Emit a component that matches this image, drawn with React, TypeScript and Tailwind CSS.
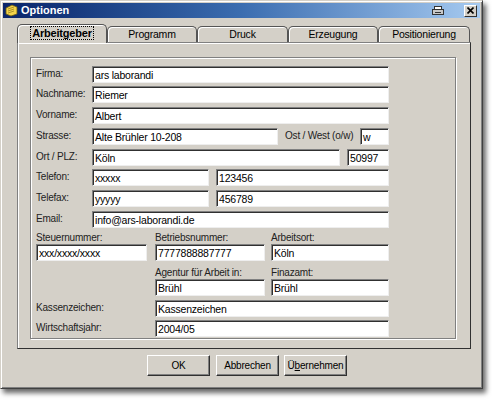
import React from "react";

const font = "font-['Liberation_Sans',Arial,sans-serif] tracking-[-0.2px]";

function Input({ value, className = "" }: { value: string; className?: string }) {
  return (
    <div
      className={`h-[17px] shrink-0 overflow-hidden whitespace-nowrap bg-white border border-t-[#808080] border-l-[#808080] border-r-[#eeeeee] border-b-[#eeeeee] shadow-[inset_1px_1px_0_#303030] pl-[2px] pt-[1px] text-[10.5px] leading-[14px] text-black ${className}`}
    >
      {value}
    </div>
  );
}

function Label({ children, className = "" }: { children: React.ReactNode; className?: string }) {
  return (
    <div className={`shrink-0 whitespace-nowrap text-[10px] leading-[13px] text-[#222] ${className}`}>{children}</div>
  );
}

function Tab({ label, w, active }: { label: string; w: string; active?: boolean }) {
  if (active)
    return (
      <div
        className={`${w} relative z-10 -mb-px h-[19px] shrink-0 rounded-t-[5px] border border-b-0 border-[#555] bg-[#d4d0c8] shadow-[inset_1px_1px_0_#fff] flex items-center justify-center pb-[2px]`}
      >
        <span className="border border-dotted border-black px-[1px] text-[11px] font-bold leading-[12px] text-black">
          {label}
        </span>
      </div>
    );
  return (
    <div
      className={`${w} h-[16px] shrink-0 rounded-t-[5px] border border-b-0 border-[#555] bg-[#d4d0c8] shadow-[inset_1px_1px_0_#fff] flex items-center justify-center text-[10.5px] leading-[13px] text-black`}
    >
      {label}
    </div>
  );
}

function Button({ children, className = "" }: { children: React.ReactNode; className?: string }) {
  return (
    <div
      className={`w-[63px] h-[21px] shrink-0 bg-[#d4d0c8] border border-t-white border-l-white border-r-[#303030] border-b-[#303030] shadow-[inset_-1px_-1px_0_#808080] flex items-center justify-center text-[10px] text-black ${className}`}
    >
      {children}
    </div>
  );
}

export default function App() {
  return (
    <div className={`w-[492px] h-[400px] bg-white ${font}`}>
      <div className="w-[483px] h-[389px] bg-[#d4d0c8] border border-t-[#d4d0c8] border-l-[#d4d0c8] border-r-[#404040] border-b-[#404040] shadow-[inset_1px_1px_0_#fff,inset_-1px_-1px_0_#808080,3px_4px_5px_rgba(0,0,0,0.6)] p-[2px] flex flex-col">
        {/* title bar */}
        <div className="h-[15px] flex items-center bg-linear-to-r from-[#0a246a] via-[#3b6db0] to-[#a6caf0] pl-[2px] pr-[3px]">
          <svg width="13" height="13" viewBox="0 0 13 13" className="shrink-0">
            <path d="M1 4 L7 1 L12 3 L12 10 L6 12 L1 10 Z" fill="#f3d34a" stroke="#6b5a10" strokeWidth="0.8" />
            <path d="M3 5 L9 3 M3 7 L9 5 M3 9 L9 7" stroke="#8a7420" strokeWidth="0.7" />
          </svg>
          <span className="ml-[3px] text-[11px] font-bold leading-[13px] tracking-normal text-white">Optionen</span>
          <div className="ml-auto flex items-center">
            <div className="w-[12px] h-[10px] flex items-center justify-center">
              <svg width="12" height="10" viewBox="0 0 12 10">
                <rect x="0.5" y="3.5" width="11" height="5" fill="#c8c8c8" stroke="#333" strokeWidth="1" />
                <rect x="2.5" y="0.5" width="7" height="3" fill="#fff" stroke="#333" strokeWidth="1" />
                <rect x="3" y="6" width="6" height="1" fill="#333" />
              </svg>
            </div>
            <div className="ml-[20px] w-[13px] h-[12px] bg-[#d4d0c8] border border-t-white border-l-white border-r-[#303030] border-b-[#303030] flex items-center justify-center">
              <svg width="7" height="7" viewBox="0 0 7 7">
                <path d="M0.5 0.5 L6.5 6.5 M6.5 0.5 L0.5 6.5" stroke="#000" strokeWidth="1.6" />
              </svg>
            </div>
          </div>
        </div>

        {/* tabs */}
        <div className="mt-[6px] ml-[14px] flex items-end h-[18px]">
          <Tab label="Arbeitgeber" w="w-[90px]" active />
          <Tab label="Programm" w="w-[90px]" />
          <Tab label="Druck" w="w-[91px]" />
          <Tab label="Erzeugung" w="w-[90px]" />
          <Tab label="Positionierung" w="w-[92px]" />
        </div>

        {/* panel */}
        <div className="ml-[14px] w-[454px] h-[307px] border border-[#808080] border-r-[#303030] border-b-[#303030] shadow-[inset_1px_1px_0_#fff] pt-[14px] pl-[12px]">
          <div className="w-[426px] h-[282px] border border-[#808080] shadow-[inset_1px_1px_0_#fff,1px_1px_0_#fff] pt-[8px] pl-[5px] flex flex-col">
            <div className="flex items-center w-[353px]">
              <Label className="w-[56px] -mt-[2px]">Firma:</Label>
              <Input value="ars laborandi" className="w-[297px]" />
            </div>
            <div className="mt-[3px] flex items-center w-[353px]">
              <Label className="w-[56px] -mt-[2px]">Nachname:</Label>
              <Input value="Riemer" className="w-[297px]" />
            </div>
            <div className="mt-[4px] flex items-center w-[353px]">
              <Label className="w-[56px] -mt-[2px]">Vorname:</Label>
              <Input value="Albert" className="w-[297px]" />
            </div>
            <div className="mt-[4px] flex items-center w-[353px]">
              <Label className="w-[56px] -mt-[2px]">Strasse:</Label>
              <Input value="Alte Brühler 10-208" className="w-[186px]" />
              <Label className="ml-[7px] -mt-[2px]">Ost / West (o/w)</Label>
              <Input value="w" className="ml-auto w-[29px]" />
            </div>
            <div className="mt-[4px] flex items-center w-[353px]">
              <Label className="w-[56px] -mt-[2px]">Ort / PLZ:</Label>
              <Input value="Köln" className="w-[248px]" />
              <Input value="50997" className="ml-auto w-[42px]" />
            </div>
            <div className="mt-[3px] flex items-center w-[353px]">
              <Label className="w-[56px] -mt-[2px]">Telefon:</Label>
              <Input value="xxxxx" className="w-[117px]" />
              <Input value="123456" className="ml-auto w-[173px]" />
            </div>
            <div className="mt-[4px] flex items-center w-[353px]">
              <Label className="w-[56px] -mt-[2px]">Telefax:</Label>
              <Input value="yyyyy" className="w-[117px]" />
              <Input value="456789" className="ml-auto w-[173px]" />
            </div>
            <div className="mt-[4px] flex items-center w-[353px]">
              <Label className="w-[56px] -mt-[2px]">Email:</Label>
              <Input value="info@ars-laborandi.de" className="w-[297px]" />
            </div>

            <div className="mt-[3px] flex">
              <Label className="w-[119px]">Steuernummer:</Label>
              <Label className="w-[116px]">Betriebsnummer:</Label>
              <Label>Arbeitsort:</Label>
            </div>
            <div className="flex">
              <Input value="xxx/xxxx/xxxx" className="w-[111px]" />
              <Input value="7777888887777" className="ml-[8px] w-[110px]" />
              <Input value="Köln" className="ml-[6px] w-[118px]" />
            </div>
            <div className="mt-[5px] flex">
              <Label className="ml-[119px] w-[116px]">Agentur für Arbeit in:</Label>
              <Label>Finazamt:</Label>
            </div>
            <div className="flex">
              <Input value="Brühl" className="ml-[119px] w-[110px]" />
              <Input value="Brühl" className="ml-[6px] w-[118px]" />
            </div>
            <div className="mt-[4px] flex items-center">
              <Label className="w-[119px] -mt-[2px]">Kassenzeichen:</Label>
              <Input value="Kassenzeichen" className="w-[234px]" />
            </div>
            <div className="mt-[3px] flex items-center">
              <Label className="w-[119px] -mt-[2px]">Wirtschaftsjahr:</Label>
              <Input value="2004/05" className="w-[234px]" />
            </div>
          </div>
        </div>

        {/* buttons */}
        <div className="mt-[6px] ml-[144px] flex">
          <Button>OK</Button>
          <Button className="ml-[6px]">Abbrechen</Button>
          <Button className="ml-[5px]">
            Ü<u>b</u>ernehmen
          </Button>
        </div>
      </div>
    </div>
  );
}
